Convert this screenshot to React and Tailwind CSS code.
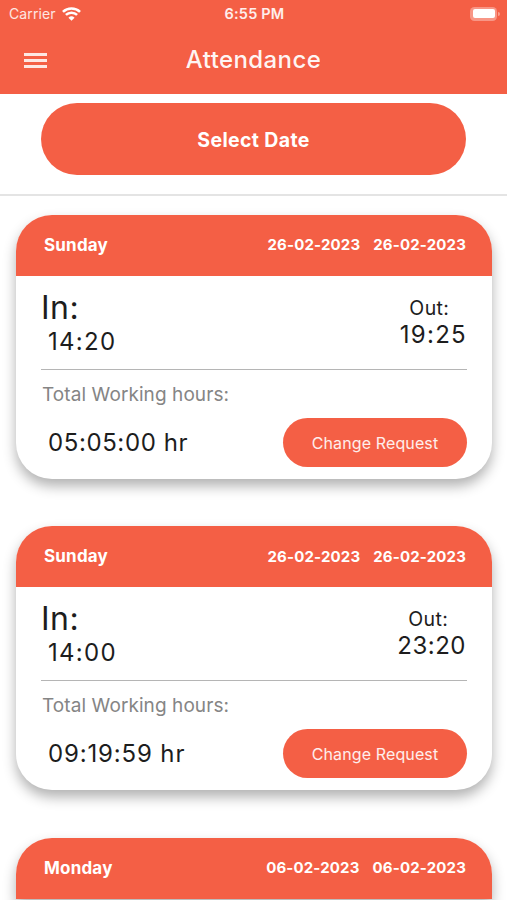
const records = [
  { day: "Sunday", from: "26-02-2023", to: "26-02-2023", inTime: "14:20", outTime: "19:25", total: "05:05:00 hr" },
  { day: "Sunday", from: "26-02-2023", to: "26-02-2023", inTime: "14:00", outTime: "23:20", total: "09:19:59 hr" },
  { day: "Monday", from: "06-02-2023", to: "06-02-2023" },
];

// Opens up times holding the narrow digit 1, so that every time has the same width.
const timeTracking = (time) => (time.includes("1") ? "-mr-px tracking-[1.3px]" : "tracking-[0.5px]");
const totalTracking = (total) => (total.includes("1") ? "tracking-[0.85px]" : "tracking-[0.6px]");

function StatusBar() {
  return (
    <div className="grid h-[27px] grid-cols-3 items-center pl-[9px] pr-[7px] text-[14px] leading-none">
      <div className="flex items-center gap-[6px]">
        <span className="tracking-[0.1px] text-white/85">Carrier</span>
        <svg className="h-[14px] w-[19px]" viewBox="0 0 18 14" preserveAspectRatio="none" fill="none" stroke="white" strokeWidth="2.4">
          <path d="M0.9 4.8a11.5 11.5 0 0 1 16.2 0" />
          <path d="M3.7 7.9a7.5 7.5 0 0 1 10.6 0" />
          <path d="M9 13.7L6.1 10.7a4.1 4.1 0 0 1 5.8 0z" fill="white" stroke="none" />
        </svg>
      </div>
      <div className="pt-px text-center text-[14.5px] font-semibold tracking-[0.2px] text-white/90">6:55 PM</div>
      <div className="flex items-center justify-end gap-px">
        <div className="h-[14px] w-[27px] rounded-[4.5px] bg-white/35 p-[2.5px]">
          <div className="h-full rounded-[2px] bg-white" />
        </div>
        <div className="h-[4px] w-[2px] rounded-r-full bg-white/40" />
      </div>
    </div>
  );
}

function AttendanceCard({ record }) {
  return (
    <article
      className={
        record.total
          ? "h-[264px] shrink-0 overflow-hidden rounded-[36px] bg-white shadow-[0_7px_13px_rgba(0,0,0,0.31)]"
          : "shrink-0 overflow-hidden rounded-t-[36px] bg-white shadow-[0_7px_13px_rgba(0,0,0,0.31)]"
      }
    >
      <header className="flex h-[61px] items-center justify-between bg-[#f45f45] pl-7 pr-[26px] font-bold text-white">
        <span className="text-[17px] tracking-[0.2px]">{record.day}</span>
        <div className="flex gap-[13px] text-[15px] tracking-[0.16px]">
          <span>{record.from}</span>
          <span>{record.to}</span>
        </div>
      </header>
      {record.total && (
        <div className="px-[25px] text-[#1d1d1d]">
          <div className="flex h-[94px] justify-between border-b border-[#b5b5b5]">
            <div className="pt-[13px]">
              <div className="text-[32px] leading-[38px] tracking-[0.5px]">In:</div>
              <div className={`pl-[7px] text-[24px] leading-[30px] ${timeTracking(record.inTime)}`}>{record.inTime}</div>
            </div>
            <div className="pr-px pt-[20px] text-center">
              <div className="pr-[7px] text-[19.5px] leading-[25px] tracking-[0.4px]">Out:</div>
              <div className={`text-[24px] leading-[28px] ${timeTracking(record.outTime)}`}>{record.outTime}</div>
            </div>
          </div>
          <div className="mt-[12px] pl-px text-[19px] leading-[25px] tracking-[0.08px] text-[#858585]">Total Working hours:</div>
          <div className="mt-[11px] flex items-center justify-between">
            <span className={`pl-[7px] text-[24px] leading-[30px] ${totalTracking(record.total)}`}>{record.total}</span>
            <button className="h-[49px] w-[184px] rounded-full bg-[#f45f45] text-[16px] tracking-[0.12px] text-white/90">Change Request</button>
          </div>
        </div>
      )}
    </article>
  );
}

export default function App() {
  return (
    <main className="flex h-[900px] w-[507px] flex-col overflow-hidden bg-white font-['Inter',sans-serif]">
      <header className="h-[94px] shrink-0 bg-[#f45f45] text-white">
        <StatusBar />
        <div className="grid h-[66px] grid-cols-[1fr_auto_1fr] items-center px-6">
          <button aria-label="Menu" className="flex w-[23px] flex-col gap-[3px]">
            <span className="h-[3px] bg-white/85" />
            <span className="h-[3px] bg-white/85" />
            <span className="h-[3px] bg-white/85" />
          </button>
          <h1 className="text-[24px] font-medium tracking-[0.4px] text-white/95">Attendance</h1>
        </div>
      </header>
      <div className="h-[102px] shrink-0 border-b-2 border-[#e4e4e4] px-[41px] pt-[9.4px]">
        <button className="h-[72px] w-full rounded-full bg-[#f45f45] pt-[2px] text-[19.5px] font-bold tracking-[0.35px] text-white">Select Date</button>
      </div>
      <section className="flex flex-col gap-[47.4px] pl-4 pr-[15px] pt-[19px]">
        {records.map((record, i) => (
          <AttendanceCard key={i} record={record} />
        ))}
      </section>
    </main>
  );
}
